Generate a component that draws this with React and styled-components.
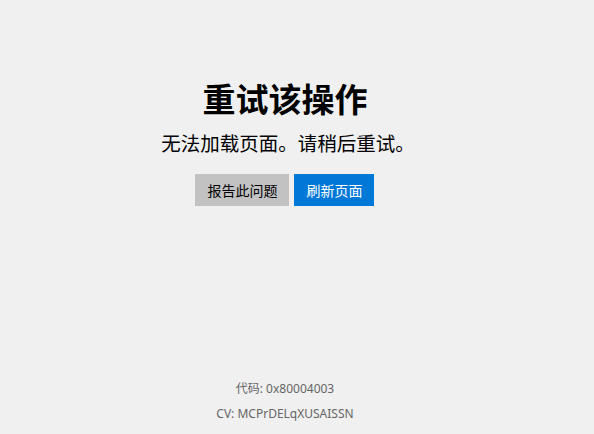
import React from 'react';
import styled, { createGlobalStyle } from 'styled-components';

const GlobalStyle = createGlobalStyle`
  html, body {
    margin: 0;
    padding: 0;
    height: 100%;
    background: #f0f0f0;
  }
  #root {
    height: 100%;
  }
  * {
    box-sizing: border-box;
  }
`;

const Page = styled.div`
  height: 100%;
  max-width: 570px;
  display: flex;
  flex-direction: column;
  align-items: center;
  font-family: "Noto Sans", "Noto Sans CJK SC", sans-serif;
  color: #000;
`;

const Content = styled.main`
  flex: 1;
  display: flex;
  flex-direction: column;
  align-items: center;
  padding-top: 78px;
`;

const Title = styled.h1`
  margin: 0;
  font-family: "Noto Sans CJK SC", sans-serif;
  font-size: 33px;
  font-weight: 700;
  line-height: 40px;
`;

const Message = styled.p`
  margin: 11px 0 0;
  padding-left: 6px;
  font-family: "Noto Sans CJK SC", sans-serif;
  font-size: 19.5px;
  line-height: 28px;
`;

const Actions = styled.div`
  display: flex;
  gap: 5px;
  margin-top: 17px;
`;

const Button = styled.button`
  height: 32px;
  padding: 0 12px;
  border: none;
  border-radius: 0;
  font-family: "Noto Sans CJK SC", sans-serif;
  font-size: 14px;
  line-height: 32px;
  cursor: pointer;
  background: ${({ $primary }) => ($primary ? '#0078d7' : '#c2c2c2')};
  color: ${({ $primary }) => ($primary ? '#fff' : '#000')};
`;

const Footer = styled.footer`
  display: flex;
  flex-direction: column;
  align-items: center;
  gap: 5px;
  padding-bottom: 10px;
  font-size: 12px;
  line-height: 20px;
  color: #666;
`;

function App() {
  return (
    <>
      <GlobalStyle />
      <Page>
        <Content>
          <Title>重试该操作</Title>
          <Message>无法加载页面。请稍后重试。</Message>
          <Actions>
            <Button>报告此问题</Button>
            <Button $primary>刷新页面</Button>
          </Actions>
        </Content>
        <Footer>
          <span>代码: 0x80004003</span>
          <span>CV: MCPrDELqXUSAISSN</span>
        </Footer>
      </Page>
    </>
  );
}

export default App;
